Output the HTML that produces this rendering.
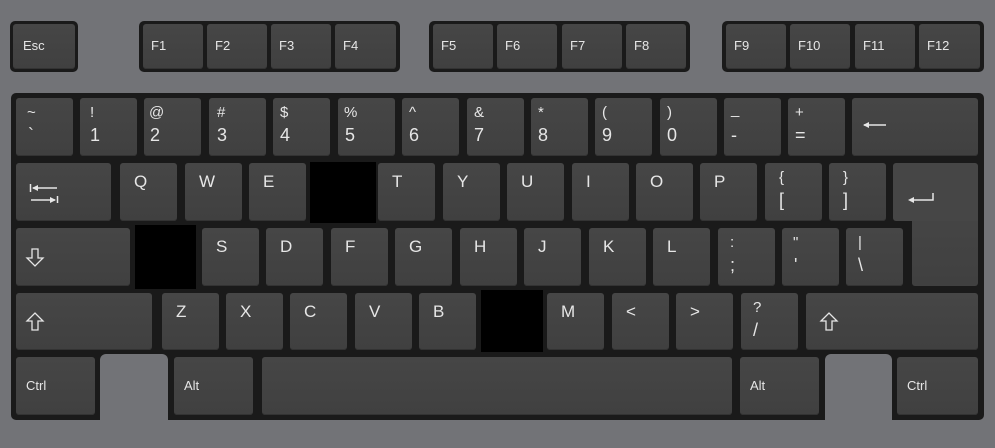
<html><head><style>
body{margin:0;width:995px;height:448px;background:#727377;position:relative;overflow:hidden;font-family:"Liberation Sans",sans-serif}
div{position:absolute;box-sizing:border-box}
svg{position:absolute}
.f{background:#1a1a1a;border-radius:5px}
.k{background:linear-gradient(#464646,#404040);border-radius:3px;color:#e6e6e6;font-size:17px;box-shadow:inset 0 -1px 0 #333}
.k span{position:absolute;left:14px;top:9px}
.k .t{top:6px;font-size:15px}.k .b{top:27px;font-size:18px}
.s{font-size:13px}
.g{background:#727377;border-radius:6px 6px 0 0}
.bk{background:#000}
</style></head><body>
<div class="f" style="left:10px;top:21px;width:68px;height:51px"></div>
<div class="f" style="left:139px;top:21px;width:261px;height:51px"></div>
<div class="f" style="left:429px;top:21px;width:261px;height:51px"></div>
<div class="f" style="left:722px;top:21px;width:262px;height:51px"></div>
<div class="f" style="left:11px;top:93px;width:973px;height:327px"></div>
<div class="g" style="left:100px;top:354px;width:68px;height:94px"></div>
<div class="g" style="left:825px;top:354px;width:67px;height:94px"></div>

<div class="k" style="left:13px;top:24px;width:62px;height:45px"><span class="s" style="top:14px;left:10px">Esc</span></div>
<div class="k" style="left:143px;top:24px;width:60px;height:45px"><span class="s" style="top:14px;left:8px">F1</span></div>
<div class="k" style="left:207px;top:24px;width:60px;height:45px"><span class="s" style="top:14px;left:8px">F2</span></div>
<div class="k" style="left:271px;top:24px;width:60px;height:45px"><span class="s" style="top:14px;left:8px">F3</span></div>
<div class="k" style="left:335px;top:24px;width:61px;height:45px"><span class="s" style="top:14px;left:8px">F4</span></div>
<div class="k" style="left:433px;top:24px;width:60px;height:45px"><span class="s" style="top:14px;left:8px">F5</span></div>
<div class="k" style="left:497px;top:24px;width:60px;height:45px"><span class="s" style="top:14px;left:8px">F6</span></div>
<div class="k" style="left:562px;top:24px;width:60px;height:45px"><span class="s" style="top:14px;left:8px">F7</span></div>
<div class="k" style="left:626px;top:24px;width:60px;height:45px"><span class="s" style="top:14px;left:8px">F8</span></div>
<div class="k" style="left:726px;top:24px;width:60px;height:45px"><span class="s" style="top:14px;left:8px">F9</span></div>
<div class="k" style="left:790px;top:24px;width:60px;height:45px"><span class="s" style="top:14px;left:8px">F10</span></div>
<div class="k" style="left:855px;top:24px;width:60px;height:45px"><span class="s" style="top:14px;left:8px">F11</span></div>
<div class="k" style="left:919px;top:24px;width:61px;height:45px"><span class="s" style="top:14px;left:8px">F12</span></div>

<!-- row1 -->
<div class="k" style="left:16px;top:98px;width:57px;height:58px"><span class="t" style="left:11px">~</span><span class="b" style="left:12px">`</span></div>
<div class="k" style="left:80px;top:98px;width:57px;height:58px"><span class="t" style="left:10px">!</span><span class="b" style="left:10px">1</span></div>
<div class="k" style="left:144px;top:98px;width:57px;height:58px"><span class="t" style="left:5px">@</span><span class="b" style="left:6px">2</span></div>
<div class="k" style="left:209px;top:98px;width:57px;height:58px"><span class="t" style="left:8px">#</span><span class="b" style="left:8px">3</span></div>
<div class="k" style="left:273px;top:98px;width:57px;height:58px"><span class="t" style="left:7px">$</span><span class="b" style="left:7px">4</span></div>
<div class="k" style="left:338px;top:98px;width:57px;height:58px"><span class="t" style="left:6px">%</span><span class="b" style="left:7px">5</span></div>
<div class="k" style="left:402px;top:98px;width:57px;height:58px"><span class="t" style="left:7px">^</span><span class="b" style="left:7px">6</span></div>
<div class="k" style="left:467px;top:98px;width:57px;height:58px"><span class="t" style="left:7px">&amp;</span><span class="b" style="left:7px">7</span></div>
<div class="k" style="left:531px;top:98px;width:57px;height:58px"><span class="t" style="left:7px">*</span><span class="b" style="left:7px">8</span></div>
<div class="k" style="left:595px;top:98px;width:57px;height:58px"><span class="t" style="left:7px">(</span><span class="b" style="left:7px">9</span></div>
<div class="k" style="left:660px;top:98px;width:57px;height:58px"><span class="t" style="left:7px">)</span><span class="b" style="left:7px">0</span></div>
<div class="k" style="left:724px;top:98px;width:57px;height:58px"><span class="t" style="left:7px;top:3px">_</span><span class="b" style="left:7px">-</span></div>
<div class="k" style="left:788px;top:98px;width:57px;height:58px"><span class="t" style="left:7px">+</span><span class="b" style="left:7px">=</span></div>
<div class="k" style="left:852px;top:98px;width:126px;height:58px"><svg style="left:10px;top:22px" width="30" height="10"><path d="M2 5H24" stroke="#e6e6e6" stroke-width="1.5"/><path d="M1 5L7 2V8Z" fill="#e6e6e6"/></svg></div>
<!-- row2 -->
<div class="k" style="left:16px;top:163px;width:95px;height:58px"><svg style="left:13px;top:18px" width="32" height="22" fill="none" stroke="#e6e6e6" stroke-width="1.5"><path d="M1.5 3V11M4 7H28"/><path d="M3 7L9 4V10Z" fill="#e6e6e6" stroke="none"/><path d="M2 19H26M28.5 15V23"/><path d="M27 19L21 16V22Z" fill="#e6e6e6" stroke="none"/></svg></div>
<div class="k" style="left:120px;top:163px;width:57px;height:58px"><span>Q</span></div>
<div class="k" style="left:185px;top:163px;width:57px;height:58px"><span>W</span></div>
<div class="k" style="left:249px;top:163px;width:57px;height:58px"><span>E</span></div>
<div class="bk" style="left:310px;top:162px;width:66px;height:61px"></div>
<div class="k" style="left:378px;top:163px;width:57px;height:58px"><span>T</span></div>
<div class="k" style="left:443px;top:163px;width:57px;height:58px"><span>Y</span></div>
<div class="k" style="left:507px;top:163px;width:57px;height:58px"><span>U</span></div>
<div class="k" style="left:572px;top:163px;width:57px;height:58px"><span>I</span></div>
<div class="k" style="left:636px;top:163px;width:57px;height:58px"><span>O</span></div>
<div class="k" style="left:700px;top:163px;width:57px;height:58px"><span>P</span></div>
<div class="k" style="left:765px;top:163px;width:57px;height:58px"><span class="t">{</span><span class="b">[</span></div>
<div class="k" style="left:829px;top:163px;width:57px;height:58px"><span class="t">}</span><span class="b">]</span></div>
<div class="k" style="left:912px;top:200px;width:66px;height:86px;border-radius:0 0 3px 3px;box-shadow:none"></div>
<div class="k" style="left:893px;top:163px;width:85px;height:58px;border-radius:3px 3px 0 3px;background:#464646;box-shadow:none"><svg style="left:14px;top:28px" width="30" height="12" fill="none" stroke="#e6e6e6" stroke-width="1.5"><path d="M3 9H26V2"/><path d="M1 9L7 6V12Z" fill="#e6e6e6" stroke="none"/></svg></div>
<!-- row3 -->
<div class="k" style="left:16px;top:228px;width:114px;height:58px"><svg style="left:9px;top:19px" width="22" height="22" fill="none" stroke="#e6e6e6" stroke-width="1.3"><path d="M7 2H13V11H18L10 19L2 11H7Z"/></svg></div>
<div class="bk" style="left:135px;top:225px;width:61px;height:64px"></div>
<div class="k" style="left:202px;top:228px;width:57px;height:58px"><span>S</span></div>
<div class="k" style="left:266px;top:228px;width:57px;height:58px"><span>D</span></div>
<div class="k" style="left:331px;top:228px;width:57px;height:58px"><span>F</span></div>
<div class="k" style="left:395px;top:228px;width:57px;height:58px"><span>G</span></div>
<div class="k" style="left:460px;top:228px;width:57px;height:58px"><span>H</span></div>
<div class="k" style="left:524px;top:228px;width:57px;height:58px"><span>J</span></div>
<div class="k" style="left:589px;top:228px;width:57px;height:58px"><span>K</span></div>
<div class="k" style="left:653px;top:228px;width:57px;height:58px"><span>L</span></div>
<div class="k" style="left:718px;top:228px;width:57px;height:58px"><span class="t" style="left:12px">:</span><span class="b" style="left:12px">;</span></div>
<div class="k" style="left:782px;top:228px;width:57px;height:58px"><span class="t" style="left:11px">"</span><span class="b" style="left:12px">'</span></div>
<div class="k" style="left:846px;top:228px;width:57px;height:58px"><span class="t" style="left:12px">|</span><span class="b" style="left:12px">\</span></div>
<!-- row4 -->
<div class="k" style="left:16px;top:293px;width:136px;height:57px"><svg style="left:9px;top:17px" width="22" height="22" fill="none" stroke="#e6e6e6" stroke-width="1.3"><path d="M7 20H13V11H18L10 3L2 11H7Z"/></svg></div>
<div class="k" style="left:162px;top:293px;width:57px;height:57px"><span>Z</span></div>
<div class="k" style="left:226px;top:293px;width:57px;height:57px"><span>X</span></div>
<div class="k" style="left:290px;top:293px;width:57px;height:57px"><span>C</span></div>
<div class="k" style="left:355px;top:293px;width:57px;height:57px"><span>V</span></div>
<div class="k" style="left:419px;top:293px;width:57px;height:57px"><span>B</span></div>
<div class="bk" style="left:481px;top:290px;width:62px;height:62px"></div>
<div class="k" style="left:547px;top:293px;width:57px;height:57px"><span>M</span></div>
<div class="k" style="left:612px;top:293px;width:57px;height:57px"><span>&lt;</span></div>
<div class="k" style="left:676px;top:293px;width:57px;height:57px"><span>&gt;</span></div>
<div class="k" style="left:741px;top:293px;width:57px;height:57px"><span class="t" style="left:12px">?</span><span class="b" style="left:12px">/</span></div>
<div class="k" style="left:806px;top:293px;width:172px;height:57px"><svg style="left:13px;top:17px" width="22" height="22" fill="none" stroke="#e6e6e6" stroke-width="1.3"><path d="M7 20H13V11H18L10 3L2 11H7Z"/></svg></div>
<!-- row5 -->
<div class="k" style="left:16px;top:357px;width:79px;height:58px"><span class="s" style="left:10px;top:21px">Ctrl</span></div>
<div class="k" style="left:174px;top:357px;width:79px;height:58px"><span class="s" style="left:10px;top:21px">Alt</span></div>
<div class="k" style="left:262px;top:357px;width:470px;height:58px"></div>
<div class="k" style="left:740px;top:357px;width:79px;height:58px"><span class="s" style="left:10px;top:21px">Alt</span></div>
<div class="k" style="left:897px;top:357px;width:81px;height:58px"><span class="s" style="left:10px;top:21px">Ctrl</span></div>
</body></html>
